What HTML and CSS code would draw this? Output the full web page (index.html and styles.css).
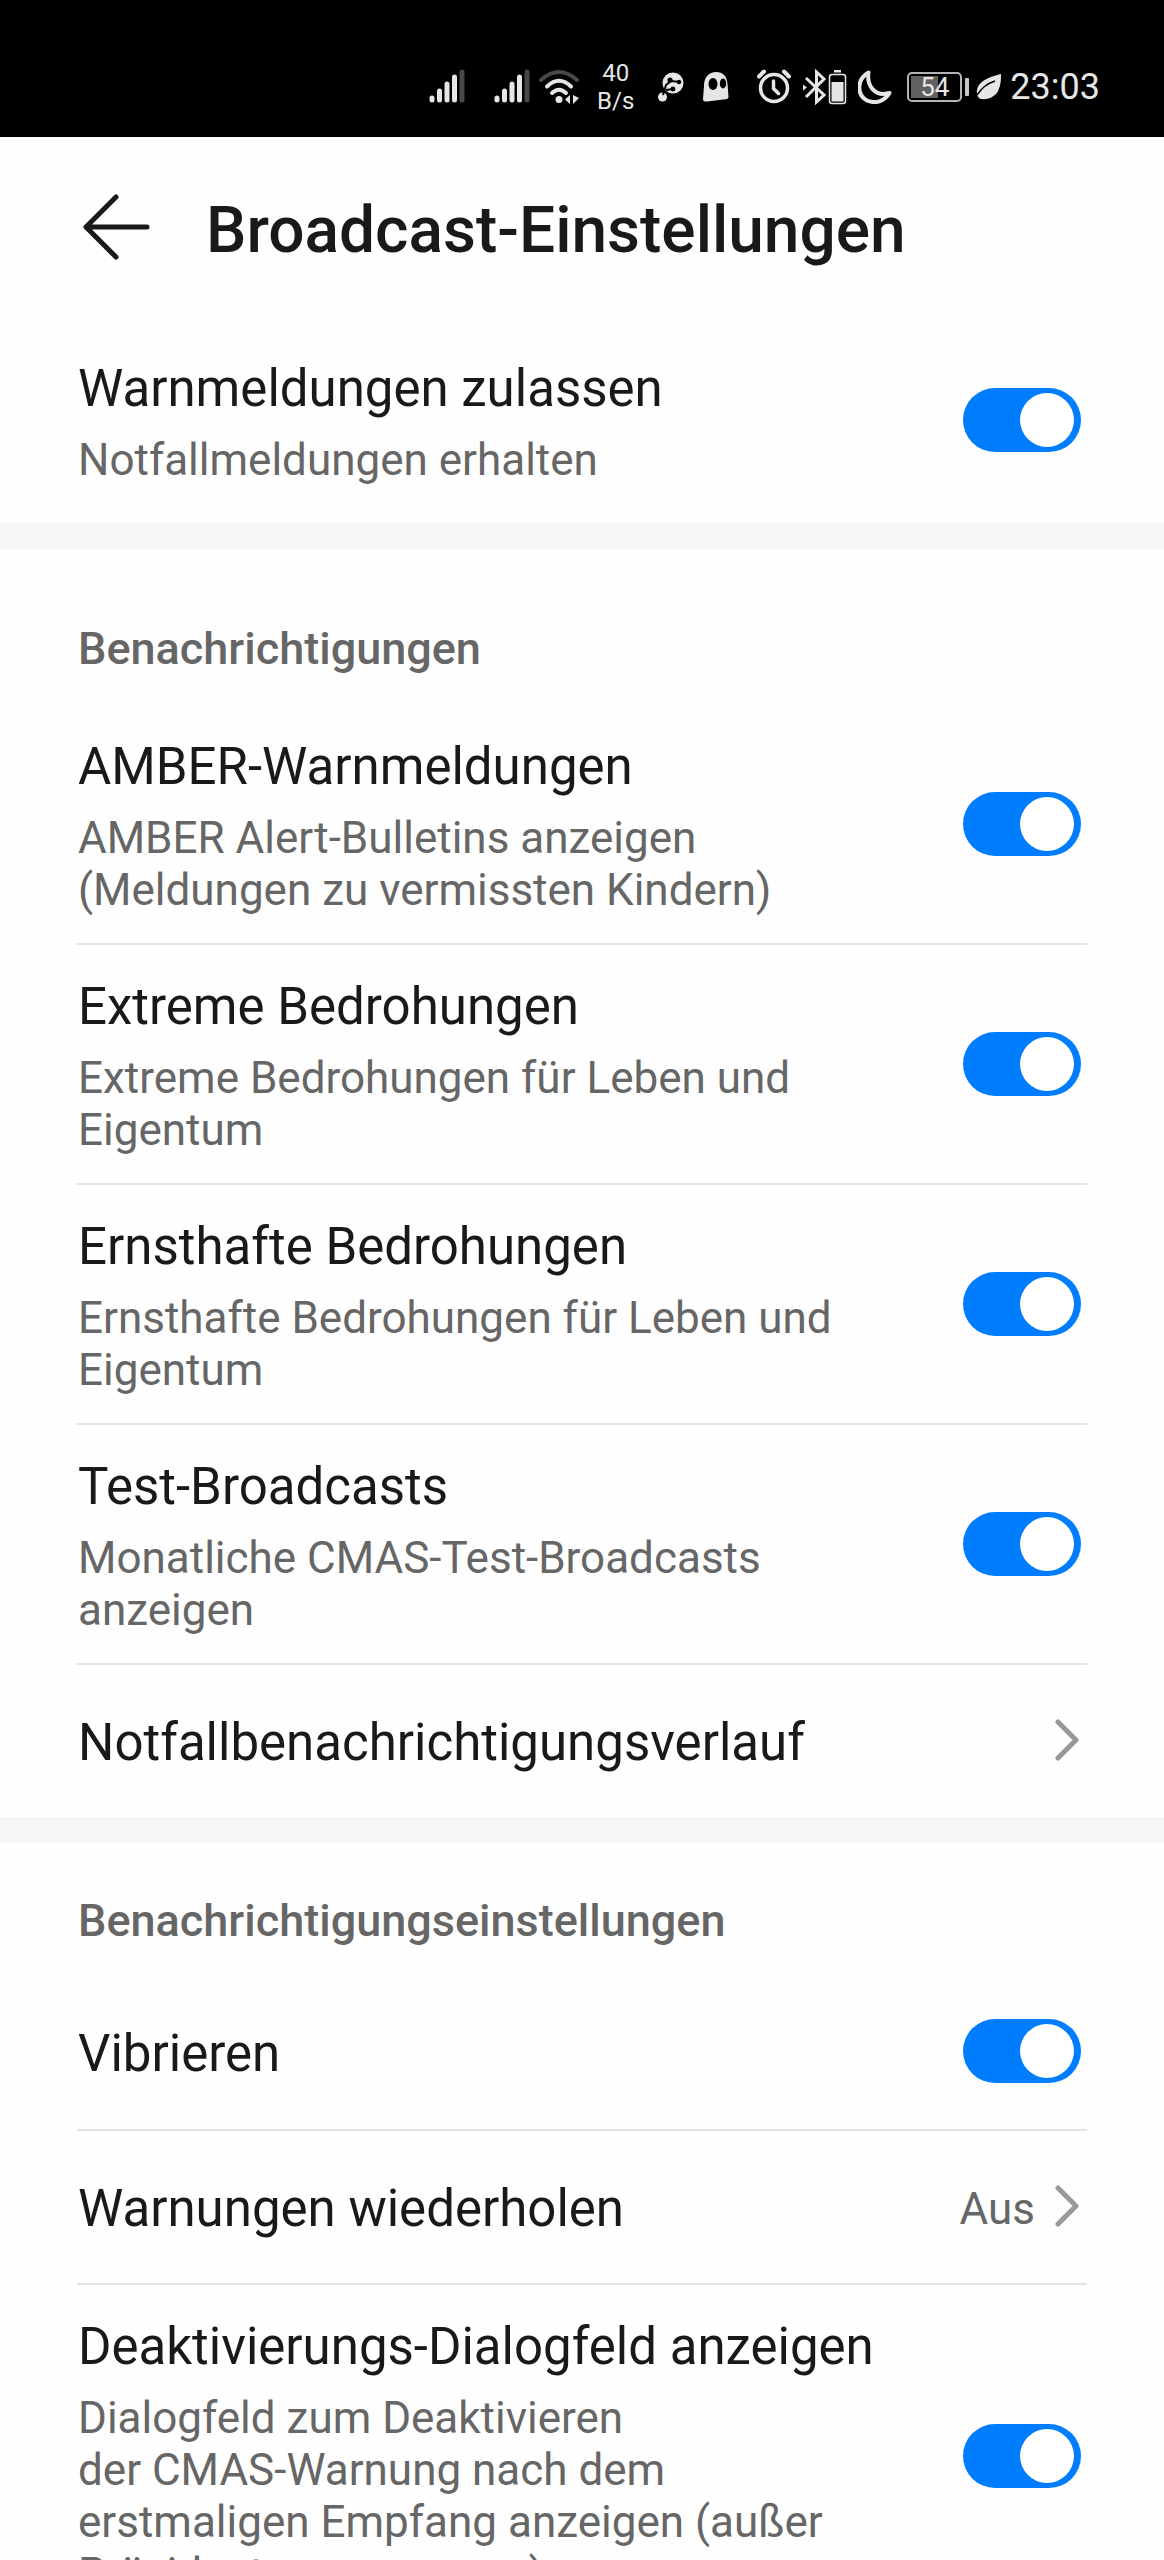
FILE: index.html
```html
<!DOCTYPE html>
<html lang="de">
<head>
<meta charset="utf-8">
<meta name="viewport" content="width=device-width, initial-scale=1">
<title>Broadcast-Einstellungen</title>
<link rel="stylesheet" href="styles.css">
</head>
<body>
<div class="screen">
  <div class="status">
    <svg class="ic-signal" width="36" height="36" viewBox="0 0 36 36" aria-hidden="true"><g stroke-width="5" stroke-linecap="round"><path d="M3 31v-2M10.500 31v-9M18 31v-16M25.500 31v-23" stroke="#e6e6e6"/><path d="M33 31V3" stroke="#484848"/></g></svg>
    <svg class="ic-signal2" width="36" height="36" viewBox="0 0 36 36" aria-hidden="true"><g stroke-width="5" stroke-linecap="round"><path d="M3 31v-2M10.500 31v-9M18 31v-16M25.500 31v-23" stroke="#e6e6e6"/><path d="M33 31V3" stroke="#484848"/></g></svg>
    <svg class="ic-wifi" width="40" height="36" viewBox="0 0 40 36" aria-hidden="true"><g fill="none" stroke-width="4" stroke-linecap="round"><path d="M2 11Q20-5 38 11" stroke="#484848"/><path d="M8 17.500Q20 6 32 17.500M13 24Q20 17.500 27 24" stroke="#e6e6e6"/></g><circle cx="20" cy="30.500" r="3.500" fill="#e6e6e6"/><path d="M26 30.500l5-4.500v9zM34 26v9l6-6z" fill="#e6e6e6"/></svg>
    <div class="speed"><span>40</span><span>B/s</span></div>
    <svg class="ic-share" width="26" height="30" viewBox="0 0 26 30" aria-hidden="true"><circle cx="15" cy="11" r="10.500" fill="#e6e6e6"/><circle cx="4.500" cy="25" r="4.500" fill="#e6e6e6"/><path d="M5 23L8 13L13 9L22 10M8 18l7-1" stroke="#000" stroke-width="2" fill="none"/><circle cx="12" cy="8" r="2.600"/><circle cx="21" cy="10" r="2.200"/><circle cx="15" cy="17" r="2.400"/></svg>
    <svg class="ic-ghost" width="26" height="30" viewBox="0 0 26 30" aria-hidden="true"><path d="M1 14C1 5 6 0 13 0s11 4 11.500 12l1 12.500c0 2-1 2.500-3 2.800L4 29.500c-2.500.3-4-.5-4-2.500z" fill="#e6e6e6"/><ellipse cx="10" cy="12" rx="4.500" ry="6"/><ellipse cx="20" cy="11.500" rx="3.200" ry="5"/></svg>
    <svg class="ic-alarm" width="34" height="36" viewBox="0 0 34 36" fill="none" stroke="#e6e6e6" stroke-linecap="round" aria-hidden="true"><circle cx="17" cy="19" r="13.500" stroke-width="3.500"/><path d="M16.500 12v7.500l5 5" stroke-width="3.500"/><path d="M2 7.500L7 2.500M32 7.500L27 2.500" stroke-width="4"/></svg>
    <svg class="ic-bt" width="44" height="36" viewBox="0 0 44 36" fill="none" stroke="#e6e6e6" aria-hidden="true"><path d="M3 9L21 26L13.500 33V3L21 10L3 28" stroke-width="3"/><path d="M0 15.500l4 3-4 3z" fill="#e6e6e6" stroke="none"/><rect x="26.500" y="5.500" width="16" height="29" rx="2.500" stroke-width="1.500"/><path d="M28.500 13h12v19.500h-12zM31 1h7v2.500h-7z" fill="#e6e6e6" stroke="none"/></svg>
    <svg class="ic-moon" width="34" height="34" viewBox="0 0 34 34" fill="none" stroke="#e6e6e6" stroke-width="4" stroke-linejoin="round" aria-hidden="true"><path d="M10.500 2.500C-2 10-1 25 9 30.500c9 4 18 0 22.500-7.500C17 27 8.500 16 10.500 2.500z"/></svg>
    <div class="battery"><span class="battery-level">54</span></div>
    <svg class="ic-leaf" width="26" height="28" viewBox="0 0 26 28" aria-hidden="true"><path d="M25 1C17 3 7 6 3 12-1 18 1 25 5 26c8 1 15-3 17.500-9C25 11 25 6 25 1z" fill="#e6e6e6"/><path d="M1 22C6 15 10 11 19 8" stroke="#000" stroke-width="1.500" fill="none"/></svg>
    <time class="clock">23:03</time>
  </div>

  <header class="header">
    <button class="back" type="button" aria-label="Zurück"><svg width="68" height="68" viewBox="0 0 68 68" fill="none" stroke="#191919" stroke-width="5" stroke-linecap="round" stroke-linejoin="round" aria-hidden="true"><path d="M33 4L3 34l30 30M3 34h61"/></svg></button>
    <h1>Broadcast-Einstellungen</h1>
  </header>

  <main class="content">
    <section class="group">
      <label class="row row-first">
        <span class="text"><span class="title">Warnmeldungen zulassen</span><span class="sub">Notfallmeldungen erhalten</span></span>
        <input class="switch" type="checkbox" role="switch" checked>
      </label>
    </section>

    <section class="group">
      <h2 class="spacious">Benachrichtigungen</h2>
      <label class="row">
        <span class="text"><span class="title">AMBER-Warnmeldungen</span><span class="sub">AMBER Alert-Bulletins anzeigen (Meldungen zu vermissten Kindern)</span></span>
        <input class="switch" type="checkbox" role="switch" checked>
      </label>
      <label class="row">
        <span class="text"><span class="title">Extreme Bedrohungen</span><span class="sub">Extreme Bedrohungen für Leben und Eigentum</span></span>
        <input class="switch" type="checkbox" role="switch" checked>
      </label>
      <label class="row">
        <span class="text"><span class="title">Ernsthafte Bedrohungen</span><span class="sub">Ernsthafte Bedrohungen für Leben und Eigentum</span></span>
        <input class="switch" type="checkbox" role="switch" checked>
      </label>
      <label class="row">
        <span class="text"><span class="title">Test-Broadcasts</span><span class="sub">Monatliche CMAS-Test-Broadcasts anzeigen</span></span>
        <input class="switch" type="checkbox" role="switch" checked>
      </label>
      <a class="row row-single" href="#verlauf">
        <span class="title">Notfallbenachrichtigungsverlauf</span>
        <svg class="chevron" width="26" height="44" viewBox="0 0 26 44" aria-hidden="true"><path d="M3 4l18 18L3 40"/></svg>
      </a>
    </section>

    <section class="group">
      <h2>Benachrichtigungseinstellungen</h2>
      <label class="row row-single">
        <span class="title">Vibrieren</span>
        <input class="switch" type="checkbox" role="switch" checked>
      </label>
      <a class="row row-single" href="#wiederholen">
        <span class="title">Warnungen wiederholen</span>
        <span class="value">Aus</span>
        <svg class="chevron" width="26" height="44" viewBox="0 0 26 44" aria-hidden="true"><path d="M3 4l18 18L3 40"/></svg>
      </a>
      <label class="row">
        <span class="text"><span class="title">Deaktivierungs-Dialogfeld anzeigen</span><span class="sub">Dialogfeld zum Deaktivieren<br>der CMAS-Warnung nach dem erstmaligen Empfang anzeigen (außer Präsidentenwarnungen)</span></span>
        <input class="switch" type="checkbox" role="switch" checked>
      </label>
    </section>
  </main>
</div>
</body>
</html>
```
FILE: styles.css
```css
* {
  box-sizing: border-box;
}

body {
  margin: 0;
  background: #fefefe;
  color: #191919;
  font-family: Roboto, "Liberation Sans", sans-serif;
}

.screen {
  display: flex;
  flex-direction: column;
  height: 100vh;
}

/* Status bar */
.status {
  display: flex;
  flex: none;
  align-items: center;
  justify-content: flex-end;
  padding: 37px 64px 0 0;
  height: 137px;
  background: #000;
  color: #e6e6e6;
}

.status svg {
  flex: none;
}

.ic-signal { margin-right: 29px; }
.ic-signal2 { margin-right: 9px; }
.ic-wifi { margin-right: 18px; }

.speed {
  display: flex;
  flex-direction: column;
  align-items: center;
  margin-right: 24px;
  font-size: 24px;
  line-height: 28px;
}

.ic-share { margin-right: 19px; }
.ic-ghost { margin-right: 28px; }
.ic-alarm { margin-right: 12px; }
.ic-bt { margin-right: 11px; }
.ic-moon { margin-right: 15px; }

.battery {
  position: relative;
  width: 55px;
  height: 30px;
  margin-right: 14px;
  padding: 2px;
  border: 2px solid #b4b4b4;
  border-radius: 5px;
}

.battery::after {
  content: "";
  position: absolute;
  top: 4px;
  right: -9px;
  width: 4px;
  height: 18px;
  border-radius: 1px;
  background: #c8c8c8;
}

.battery-level {
  display: block;
  background: linear-gradient(90deg, #606060 58%, transparent 58%);
  font-size: 26px;
  line-height: 22px;
  text-align: center;
}

.ic-leaf { margin-right: 8px; }

.clock {
  font-size: 36px;
  line-height: 44px;
}

/* Title bar */
.header {
  display: flex;
  flex: none;
  align-items: flex-start;
  gap: 55px;
  padding: 56px 83px 46px;
}

.back {
  flex: none;
  padding: 0;
  border: 0;
  background: none;
  height: 68px;
  color: inherit;
}

h1 {
  margin: 0;
  font-size: 64px;
  font-weight: 500;
  line-height: 76px;
}

/* Settings list */
.content {
  flex: 1;
  min-height: 0;
  overflow-y: auto;
  scrollbar-width: none;
}

.group {
  padding: 0 77px;
}

.group + .group {
  border-top: 26px solid #f6f6f6;
}

h2 {
  margin: 0;
  padding: 52px 1px 28px;
  color: #666;
  font-size: 45px;
  font-weight: 500;
  line-height: 52px;
}

h2.spacious {
  padding-top: 74px;
  padding-bottom: 30px;
}

.row {
  display: flex;
  align-items: center;
  padding: 32px 6px 27px 1px;
  color: inherit;
  text-decoration: none;
}

.row + .row {
  border-top: 2px solid #e3e3e3;
}

.row-first {
  padding-top: 44px;
  padding-bottom: 37px;
}

.row-single {
  min-height: 154px;
  padding-top: 4px;
  padding-bottom: 0;
}

.text {
  display: flex;
  flex: 1;
  flex-direction: column;
  gap: 15px;
  padding-right: 72px;
}

.title {
  flex: 1;
  font-size: 51px;
  line-height: 60px;
}

.sub,
.value {
  color: #666;
  font-size: 44px;
  line-height: 52px;
}

.value {
  margin-right: 20px;
}

.chevron {
  flex: none;
  margin-bottom: 6px;
  fill: none;
  stroke: #999;
  stroke-width: 5;
  stroke-linecap: round;
  stroke-linejoin: round;
}

.switch {
  position: relative;
  flex: none;
  appearance: none;
  width: 118px;
  height: 64px;
  margin: 0 0 6px;
  border-radius: 32px;
  background: #c4c4c4;
}

.switch::before {
  content: "";
  position: absolute;
  top: 5px;
  left: 7px;
  width: 54px;
  height: 54px;
  border-radius: 50%;
  background: #fff;
}

.switch:checked {
  background: #007dff;
}

.switch:checked::before {
  left: 57px;
}
```
